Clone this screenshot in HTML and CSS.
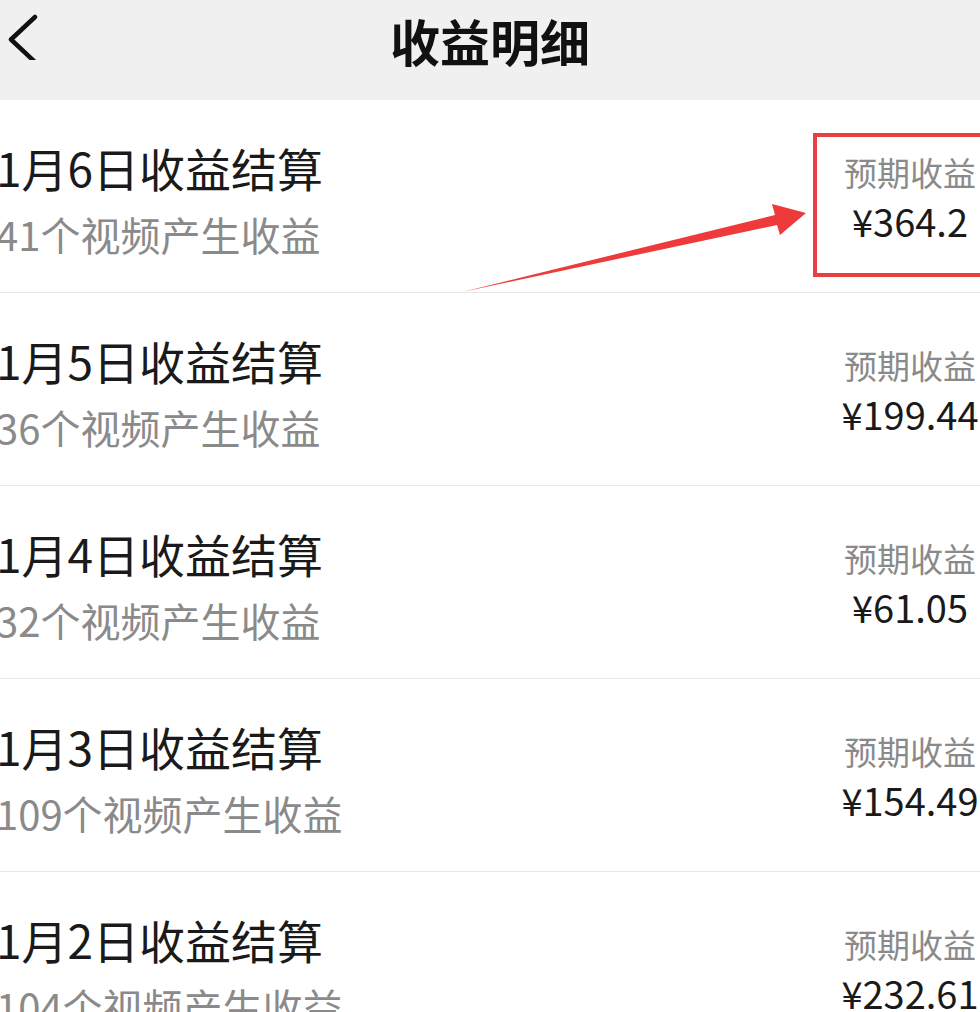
FILE: index.html
```html
<!DOCTYPE html>
<html lang="zh-CN">
<head>
<meta charset="utf-8">
<title>收益明细</title>
<link rel="stylesheet" href="styles.css">
</head>
<body>
<div class="page">
  <header class="topbar">
    <svg class="back" width="40" height="60" viewBox="0 0 40 60"><path d="M35 17 L11 39.5 L35 62" fill="none" stroke="#111" stroke-width="4.5" stroke-linecap="round" stroke-linejoin="round"/></svg>
    <h1 class="title">收益明细</h1>
  </header>
  <ul class="list">
    <li class="row">
      <div class="info"><div class="name">1月6日收益结算</div><div class="sub">41个视频产生收益</div></div>
      <div class="earn"><div class="label">预期收益</div><div class="amount">¥364.2</div></div>
    </li>
    <li class="row">
      <div class="info"><div class="name">1月5日收益结算</div><div class="sub">36个视频产生收益</div></div>
      <div class="earn"><div class="label">预期收益</div><div class="amount">¥199.44</div></div>
    </li>
    <li class="row">
      <div class="info"><div class="name">1月4日收益结算</div><div class="sub">32个视频产生收益</div></div>
      <div class="earn"><div class="label">预期收益</div><div class="amount">¥61.05</div></div>
    </li>
    <li class="row">
      <div class="info"><div class="name">1月3日收益结算</div><div class="sub">109个视频产生收益</div></div>
      <div class="earn"><div class="label">预期收益</div><div class="amount">¥154.49</div></div>
    </li>
    <li class="row">
      <div class="info"><div class="name">1月2日收益结算</div><div class="sub">104个视频产生收益</div></div>
      <div class="earn"><div class="label">预期收益</div><div class="amount">¥232.61</div></div>
    </li>
  </ul>
  <div class="mark-box"></div>
  <svg class="mark-arrow" width="980" height="1012" viewBox="0 0 980 1012"><polygon points="462,292 775,215 772,204 806,213 780,235 777,225" fill="#ee3a3a"/></svg>
</div>
</body>
</html>
```
FILE: styles.css
```css
html, body {
  margin: 0;
  padding: 0;
  background: #ffffff;
}
body {
  width: 980px;
  height: 1012px;
  overflow: hidden;
  font-family: "Noto Sans CJK SC", "Noto Sans", sans-serif;
}
.page {
  position: relative;
  width: 980px;
  height: 1012px;
  overflow: hidden;
}
.topbar {
  height: 100px;
  background: #f0f0f0;
  display: flex;
  justify-content: center;
  position: relative;
}
.back {
  position: absolute;
  left: 0;
  top: 0;
}
.title {
  margin: 0;
  padding-top: 10px;
  font-size: 50px;
  line-height: 60px;
  font-weight: 700;
  color: #111;
}
.list {
  list-style: none;
  margin: 0;
  padding: 0;
  width: 1007px;
}
.row {
  height: 192px;
  border-bottom: 1px solid #e8e8e8;
  display: flex;
  justify-content: space-between;
  align-items: flex-start;
}
.info {
  margin-left: -4px;
  padding-top: 39px;
}
.name {
  font-size: 46px;
  line-height: 56px;
  font-weight: 400;
  color: #1a1a1a;
  white-space: nowrap;
}
.sub {
  margin-top: 15px;
  font-size: 40px;
  line-height: 48px;
  color: #8a8a8a;
  white-space: nowrap;
}
.earn {
  width: 194px;
  padding-top: 52px;
  text-align: center;
}
.label {
  font-size: 33px;
  line-height: 40px;
  color: #8a8a8a;
  white-space: nowrap;
}
.amount {
  margin-top: 6px;
  font-size: 38px;
  line-height: 46px;
  color: #1a1a1a;
  white-space: nowrap;
}
.mark-box {
  position: absolute;
  left: 813px;
  top: 133px;
  width: 200px;
  height: 144px;
  box-sizing: border-box;
  border: 4px solid #e8403e;
  pointer-events: none;
}
.mark-arrow {
  position: absolute;
  left: 0;
  top: 0;
  pointer-events: none;
}
```
